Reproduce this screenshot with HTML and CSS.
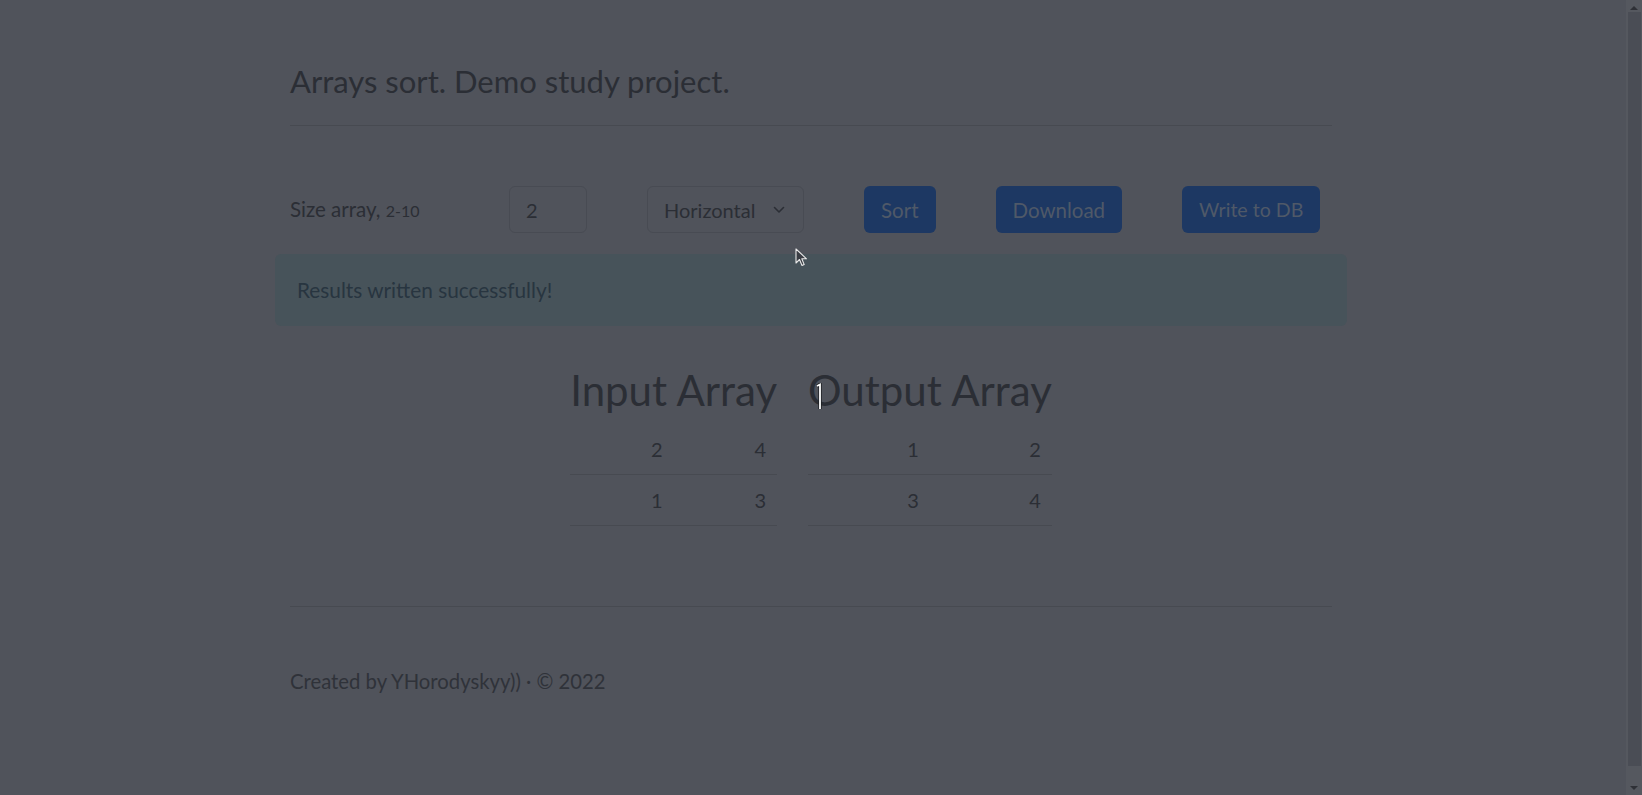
FILE: index.html
```html
<!DOCTYPE html>
<html lang="en">
<head>
<meta charset="utf-8">
<title>Arrays sort</title>
<link rel="stylesheet" href="styles.css">
</head>
<body>
<div class="page">
  <div class="container">
    <header class="header">
      <h1 class="title">Arrays sort. Demo study project.</h1>
    </header>
    <hr class="rule">
    <form class="controls">
      <label class="size-label">Size array, <small>2-10</small></label>
      <input class="field" type="text" value="2">
      <div class="select"><span>Horizontal</span>
        <svg class="chev" width="12" height="8" viewBox="0 0 12 8"><path d="M1.5 1.5 L6 6 L10.5 1.5" fill="none" stroke="#2b2e35" stroke-width="1.6" stroke-linecap="round" stroke-linejoin="round"/></svg>
      </div>
      <button class="btn" type="button">Sort</button>
      <button class="btn" type="button">Download</button>
      <button class="btn btn-db" type="button">Write to DB</button>
    </form>
    <div class="alert">Results written successfully!</div>
    <section class="arrays">
      <div class="array">
        <h2 class="array-title">Input Array</h2>
        <table class="grid">
          <tr><td>2</td><td>4</td></tr>
          <tr><td>1</td><td>3</td></tr>
        </table>
      </div>
      <div class="array">
        <h2 class="array-title">Output Array</h2>
        <table class="grid">
          <tr><td>1</td><td>2</td></tr>
          <tr><td>3</td><td>4</td></tr>
        </table>
      </div>
    </section>
    <hr class="rule footer-rule">
    <footer class="footer">Created by YHorodyskyy)) · © 2022</footer>
  </div>
</div>
<div class="scrollbar">
  <div class="arrow up"></div>
  <div class="thumb"></div>
  <div class="arrow down"></div>
</div>
<svg class="pointer" width="14" height="20" viewBox="0 0 14 20"><path d="M1 1 L1 15 L4.5 11.5 L7 17.5 L9.2 16.6 L6.8 10.8 L11.5 10.8 Z" fill="#3a3d44" stroke="#e8e8e8" stroke-width="1.1" stroke-linejoin="round"/></svg>
<svg class="ibeam" width="10" height="28" viewBox="0 0 10 28"><path d="M2 3 L5 1.5 L5 26" fill="none" stroke="#1c1e22" stroke-width="3.4"/><path d="M2 3 L5 1.5 L5 26" fill="none" stroke="#ffffff" stroke-width="1.8"/></svg>
</body>
</html>
```

FILE: styles.css
```css
html, body {
  margin: 0;
  padding: 0;
  height: 100%;
  overflow: hidden;
}
body {
  background: #50535b;
  color: #2b2e35;
  font-family: "Lato", "Noto Sans", "DejaVu Sans", sans-serif;
  font-size: 20px;
}
.page {
  padding-right: 20px;
}
.container {
  width: 1042px;
  margin: 0 auto;
}
.header {
  padding-top: 63px;
}
.title {
  margin: 0;
  font-size: 31px;
  line-height: 36px;
  font-weight: 400;
}
.rule {
  margin: 26px 0 0;
  border: 0;
  border-top: 1px solid #474a51;
  height: 0;
}
.controls {
  display: flex;
  align-items: center;
  gap: 60px;
  margin-top: 60px;
  height: 47px;
}
.size-label {
  width: 159px;
  font-size: 20.5px;
  line-height: 23px;
}
.size-label small {
  font-size: 16px;
}
.field {
  box-sizing: border-box;
  width: 78px;
  height: 47px;
  padding: 0 16px;
  background: transparent;
  border: 1px solid #484b53;
  border-radius: 6px;
  color: #2b2e35;
  font: inherit;
  font-size: 20px;
  outline: none;
}
.select {
  box-sizing: border-box;
  width: 157px;
  height: 47px;
  padding: 0 18px 0 16px;
  border: 1px solid #484b53;
  border-radius: 6px;
  display: flex;
  align-items: center;
  justify-content: space-between;
  font-size: 20px;
}
.btn {
  height: 47px;
  padding: 0 17px;
  border: 0;
  border-radius: 6px;
  background: #1d3863;
  color: #4f5968;
  font: inherit;
  font-size: 20.5px;
}
.btn-db {
  font-size: 19.6px;
}
.alert {
  margin: 21px -15px 0;
  padding: 24px 22px;
  line-height: 24px;
  background: #47535a;
  color: #283540;
  border-radius: 6px;
  font-size: 20.8px;
}
.arrays {
  display: flex;
  justify-content: center;
  gap: 31px;
  margin-top: 40px;
}
.array-title {
  margin: 0 0 10px;
  font-size: 42px;
  line-height: 48px;
  font-weight: 400;
}
.grid {
  width: 100%;
  border-collapse: collapse;
}
.grid td {
  padding: 13px 11px;
  line-height: 24px;
  text-align: right;
  border-bottom: 1px solid #474a51;
  width: 50%;
  font-size: 20px;
}
.footer-rule {
  margin-top: 80px;
}
.footer {
  margin-top: 62px;
  line-height: 24px;
  font-size: 20.3px;
  color: #2f3239;
}
.scrollbar {
  position: fixed;
  top: 0;
  right: 0;
  width: 16px;
  height: 795px;
  background: #55585f;
  display: flex;
  flex-direction: column;
  align-items: center;
}
.scrollbar .thumb {
  width: 13px;
  margin: 2px 0 0 1px;
  flex: 0 0 754px;
  background: #4a4d55;
}
.scrollbar .arrow {
  width: 0;
  height: 0;
  border-left: 4px solid transparent;
  border-right: 4px solid transparent;
}
.scrollbar .up {
  margin-top: 6px;
  border-bottom: 4px solid #2e3036;
}
.scrollbar .down {
  margin-top: auto;
  margin-bottom: 5px;
  border-top: 4px solid #2e3036;
}
.pointer {
  position: absolute;
  left: 795px;
  top: 248px;
}
.ibeam {
  position: absolute;
  left: 815px;
  top: 383px;
}
```
